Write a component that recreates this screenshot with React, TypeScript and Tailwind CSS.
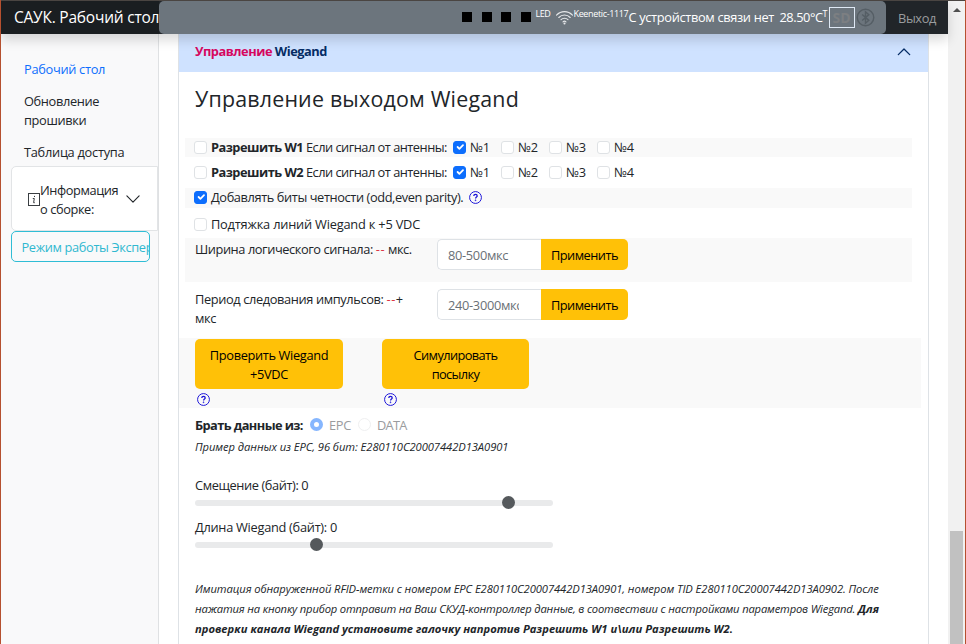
import React, { useState } from 'react';

const ANTENNAS = ['№1', '№2', '№3', '№4'];

function Check({ checked, onChange }: { checked: boolean; onChange?: () => void }) {
    return (
        <button
            type="button"
            onClick={onChange}
            className={`w-[13px] h-[13px] -mt-px -ml-px shrink-0 rounded-[3px] border flex items-center justify-center ${checked ? 'bg-[#0d6efd] border-[#0d6efd]' : 'bg-white border-[#dfe2e5]'}`}
        >
            {checked && (
                <svg viewBox="0 0 20 20" className="w-3 h-3 shrink-0" fill="none" stroke="#fff" strokeWidth="3" strokeLinecap="round" strokeLinejoin="round">
                    <path d="m6 10 3 3 6-6" />
                </svg>
            )}
        </button>
    );
}

function Help() {
    return (
        <svg viewBox="0 0 16 16" className="w-[13px] h-[13px] shrink-0" fill="none" stroke="#1a12d8">
            <circle cx="8" cy="8" r="7.3" strokeWidth="1.2" />
            <path d="M5.9 6.1c0-1.2.9-1.9 2.1-1.9s2.1.7 2.1 1.8c0 1.4-2 1.5-2 3.2" strokeWidth="1.6" />
            <circle cx="8.05" cy="11.4" r=".6" strokeWidth=".8" fill="#1a12d8" />
        </svg>
    );
}

function WiegandRow({ name, striped }: { name: string; striped?: boolean }) {
    const [enabled, setEnabled] = useState(false);
    const [active, setActive] = useState([true, false, false, false]);

    return (
        <div className={`ml-[6px] mr-4 pl-[10px] flex items-center ${striped ? 'h-[19px] bg-[#f9f9f9]' : 'h-[31px]'}`}>
            <Check checked={enabled} onChange={() => setEnabled(!enabled)} />
            <span className="ml-1 w-[243px] whitespace-nowrap tracking-[-0.5px]">
                <b className="font-bold">Разрешить {name}</b> Если сигнал от антенны:
            </span>
            {ANTENNAS.map((a, i) => (
                <span key={a} className="w-12 flex items-center gap-1">
                    <Check checked={active[i]} onChange={() => setActive(active.map((v, j) => (j === i ? !v : v)))} />
                    <span className="tracking-[-0.4px]">{a}</span>
                </span>
            ))}
        </div>
    );
}

function ApplyInput({ placeholder }: { placeholder: string }) {
    return (
        <div className="flex h-[31px] w-[191px]">
            <div className="w-[104px] border border-r-0 border-[#dee2e6] rounded-l-[5px] bg-white pl-[10px] pr-[22px] pt-[2px] flex">
                <input placeholder={placeholder} className="w-full min-w-0 outline-none bg-transparent placeholder:text-[#6a7076] tracking-[-0.3px]" />
            </div>
            <button className="flex-1 bg-[#ffc107] text-black rounded-r-[5px] whitespace-nowrap pt-[2px] tracking-[-0.5px]">Применить</button>
        </div>
    );
}

function Range({ value }: { value: number }) {
    return (
        <div className="relative w-[358px] h-[14px] flex items-center">
            <div className="w-full h-[6px] rounded-full bg-[#e9eaeb]"></div>
            <div className="absolute top-0 w-[13px] h-[13px] rounded-full bg-[#55595c]" style={{ left: value }}></div>
        </div>
    );
}

function Navbar() {
    return (
        <header className="relative z-10 h-[34px] flex bg-[#212529] border-t border-[#4a4542] shadow-[0_6px_12px_rgba(0,0,0,0.15)]">
            <div className="w-[158px] shrink-0 bg-[#1a1e21] text-white text-[15.5px] pl-[13px] flex items-center whitespace-nowrap">
                <span className="tracking-[-0.22px]">САУК. Рабочий стол</span>
            </div>
            <div className="w-[727px] shrink-0 bg-[#6c757d] rounded-[5px] flex items-center text-white pl-[303px] whitespace-nowrap">
                <div className="flex gap-[9.5px] -mt-px">
                    <span className="w-[10px] h-[10px] bg-black"></span>
                    <span className="w-[10px] h-[10px] bg-black"></span>
                    <span className="w-[10px] h-[10px] bg-black"></span>
                    <span className="w-[10px] h-[10px] bg-black"></span>
                </div>
                <span className="ml-[5px] w-[19px] -mt-[9px] text-[9px] tracking-[-0.5px]">LED</span>
                <svg viewBox="0 0 18 15" className="w-[19px] h-[15px] -mt-px shrink-0" fill="none" stroke="#e6e8ea" strokeWidth="1.1" strokeLinecap="round">
                    <path d="M1 5.2C5.5.4 12.5.4 17 5.2M3.3 7.5c3.2-3.3 8.2-3.3 11.4 0M5.5 9.7c2-2 5-2 7 0M7.5 11.8c.9-.8 2.1-.8 3 0" />
                    <circle cx="9" cy="13.5" r=".5" fill="#e6e8ea" />
                </svg>
                <span className="w-[55px] -mt-[9px] text-[9px] tracking-[-0.35px]">Keenetic-1117</span>
                <span className="w-[151px] text-[12.8px] tracking-[-0.33px]">С устройством связи нет</span>
                <span className="w-[43px] text-[12.8px] tracking-[-0.45px]">28.50°C</span>
                <span className="w-[6px] -mt-[9px] text-[9px]">T</span>
                <span className="w-[26px] h-[21px] shrink-0 border border-[#dfe9f5] text-[#7c7f82] flex items-center justify-center text-[14px] font-bold">SD</span>
                <svg viewBox="0 0 20 20" className="ml-[1px] w-[19px] h-[19px] -mt-px shrink-0" fill="none" stroke="#555e65" strokeWidth="1.5">
                    <circle cx="10" cy="10" r="8.7" />
                    <path d="m6.5 6.8 7 6.2L10 16V4l3.5 3-7 6.2" />
                </svg>
            </div>
            <a className="flex-1 flex items-center justify-center pt-[2px] text-[12.8px] tracking-[-0.4px] text-[#9b9d9f]">Выход</a>
        </header>
    );
}

function Sidebar() {
    return (
        <nav className="w-[158px] shrink-0 bg-[#f9f9fa] border-r border-[#dfe1e3] overflow-hidden">
            <div className="pt-[26px] pl-[23px] whitespace-nowrap">
                <a className="block text-[#0d6efd] tracking-[-0.3px]">Рабочий стол</a>
                <a className="block mt-[13px] tracking-[-0.35px]">Обновление<br />прошивки</a>
                <a className="block mt-[13px] tracking-[-0.27px]">Таблица доступа</a>
            </div>
            <div className="mt-1 ml-[10px] h-[65px] bg-white border border-[#e2e4e6] rounded-l-[5px] flex items-center pl-4">
                <svg viewBox="0 0 12 13" className="w-3 h-[13px] shrink-0 mt-[2px]" fill="none" stroke="#3a3e42">
                    <rect x=".5" y=".5" width="11" height="12" />
                    <path d="M4.800 5.500h1.500L5.600 9.700h1.200M6.500 2.900v1.100" strokeWidth="1" />
                </svg>
                <span className="w-[86px] pt-[2px] leading-[19px] whitespace-nowrap tracking-[-0.4px]">Информация<br />о сборке:</span>
                <svg viewBox="0 0 16 16" className="w-[14px] h-[14px] shrink-0" fill="none" stroke="#212529" strokeWidth="1.3" strokeLinecap="round" strokeLinejoin="round">
                    <path d="m1 4.500 7 7 7-7" />
                </svg>
            </div>
            <button className="ml-[10px] w-[139px] h-[31px] border border-[#2fbdd5] rounded-[5px] text-[#30b8d0] pl-[9.5px] pt-[2px] text-left whitespace-nowrap overflow-hidden flex items-center tracking-[-0.35px]">Режим работы Эксперт</button>
        </nav>
    );
}

export default function App() {
    const [parity, setParity] = useState(true);
    const [pullup, setPullup] = useState(false);

    return (
        <div className="w-[966px] h-[644px] overflow-hidden flex bg-white border-x border-[#b5502f] text-[#212529] text-[12.8px] leading-[19px] font-['Open_Sans','Noto_Sans',sans-serif]">
            <div className="w-[947px] shrink-0 flex flex-col">
                <Navbar />
                <div className="flex flex-1 min-h-0">
                    <Sidebar />
                    <main className="ml-[19px] w-[751px] border-x border-[#dee2e6] flex flex-col">
                        <div className="h-[38px] shrink-0 bg-[#cfe2ff] flex items-center justify-between pl-4 pr-[17px] pb-[3px] font-bold text-[#052c65]">
                            <span className="tracking-[-0.48px]"><span className="text-[#d6085f]">Управление</span> Wiegand</span>
                            <svg viewBox="0 0 16 16" className="w-[14px] h-[14px]" fill="none" stroke="#052c65" strokeWidth="1.5" strokeLinecap="round" strokeLinejoin="round">
                                <path d="m1.500 11 6.500-6.500 6.500 6.500" />
                            </svg>
                        </div>
                        <h4 className="h-[66px] shrink-0 pl-4 pt-[14px] text-[21.4px] leading-[26px] font-medium whitespace-nowrap tracking-[0.2px]">Управление выходом Wiegand</h4>
                        <WiegandRow name="W1" striped />
                        <WiegandRow name="W2" />
                        <div className="ml-[6px] mr-4 pl-[10px] h-[20px] pb-px bg-[#f9f9f9] flex items-center">
                            <Check checked={parity} onChange={() => setParity(!parity)} />
                            <span className="ml-1 w-[258px] whitespace-nowrap tracking-[-0.4px]">Добавлять биты четности (odd,even parity).</span>
                            <Help />
                        </div>
                        <div className="ml-[6px] pl-[10px] h-[30px] pt-[3px] flex items-center">
                            <Check checked={pullup} onChange={() => setPullup(!pullup)} />
                            <span className="ml-1 whitespace-nowrap tracking-[-0.2px]">Подтяжка линий Wiegand к +5 VDC</span>
                        </div>
                        <div className="ml-[6px] mr-4 pl-[10px] h-[44px] pt-[1px] bg-[#f9f9f9] flex items-start">
                            <span className="w-[242px] mt-[1px] whitespace-nowrap tracking-[-0.42px]">Ширина логического сигнала: <span className="text-[#dc3545] tracking-[0.5px]">--</span> мкс.</span>
                            <ApplyInput placeholder="80-500мкс" />
                        </div>
                        <div className="pl-4 h-[56px] pt-[7px] flex items-start">
                            <span className="w-[242px] mt-[1px] whitespace-nowrap tracking-[-0.37px]">Период следования импульсов: <span className="text-[#dc3545] tracking-[0.5px]">--</span>+<br />мкс</span>
                            <ApplyInput placeholder="240-3000мкс" />
                        </div>
                        <div className="mr-[7px] pl-4 pt-[1px] h-[70px] bg-[#f9f9f9] flex items-start gap-[39px]">
                            <div>
                                <button className="w-[148px] h-[50px] pt-[2px] bg-[#ffc107] text-black rounded-[5px] tracking-[-0.35px]">Проверить Wiegand<br />+5VDC</button>
                                <div className="ml-[2px] mt-1"><Help /></div>
                            </div>
                            <div>
                                <button className="w-[147px] h-[50px] pt-[2px] bg-[#ffc107] text-black rounded-[5px] tracking-[-0.6px]">Симулировать<br />посылку</button>
                                <div className="ml-[2px] mt-1"><Help /></div>
                            </div>
                        </div>
                        <div className="pl-4 pt-2 flex flex-col items-start whitespace-nowrap">
                            <div className="flex items-center h-[19px]">
                                <b className="w-[115px] font-bold tracking-[-0.58px]">Брать данные из:</b>
                                <span className="w-[13px] h-[13px] -mt-[2px] rounded-full bg-white border-4 border-[#86b6fe]"></span>
                                <span className="ml-[6px] w-[29px] text-[#9a9c9e] tracking-[-0.3px]">EPC</span>
                                <span className="w-[13px] h-[13px] -mt-[2px] rounded-full bg-white border border-[#eff0f1]"></span>
                                <span className="ml-[6px] text-[#9a9c9e] tracking-[-0.7px]">DATA</span>
                            </div>
                            <p className="mt-[3px] text-[11.2px] italic leading-[17px] tracking-[-0.06px]">Пример данных из EPC, 96 бит: E280110C20007442D13A0901</p>
                            <label className="mt-[21px] tracking-[-0.4px]">Смещение (байт): 0</label>
                            <div className="mt-px"><Range value={307} /></div>
                            <label className="mt-[8px] tracking-[-0.28px]">Длина Wiegand (байт): 0</label>
                            <div className="mt-px"><Range value={115} /></div>
                            <div className="mt-[27px] text-[11.2px] italic leading-[20px]">
                                <div className="tracking-[-0.08px]">Имитация обнаруженной RFID-метки с номером EPC E280110C20007442D13A0901, номером TID E280110C20007442D13A0902. После</div>
                                <div className="tracking-[-0.16px]">нажатия на кнопку прибор отправит на Ваш СКУД-контроллер данные, в соотвествии с настройками параметров Wiegand. <b>Для</b></div>
                                <b>проверки канала Wiegand установите галочку напротив Разрешить W1 и\или Разрешить W2.</b>
                            </div>
                        </div>
                    </main>
                </div>
            </div>
            {/* Scrollbar */}
            <div className="flex-1 bg-[#f1f1f1] border-t border-[#4a4542] flex flex-col items-center">
                <svg viewBox="0 0 8 4" className="mt-[7px] w-2 h-1" fill="#505050"><path d="M0 4 4 0l4 4z" /></svg>
                <div className="mt-[519px] w-[13px] flex-1 bg-[#c1c1c1]"></div>
            </div>
        </div>
    );
}
